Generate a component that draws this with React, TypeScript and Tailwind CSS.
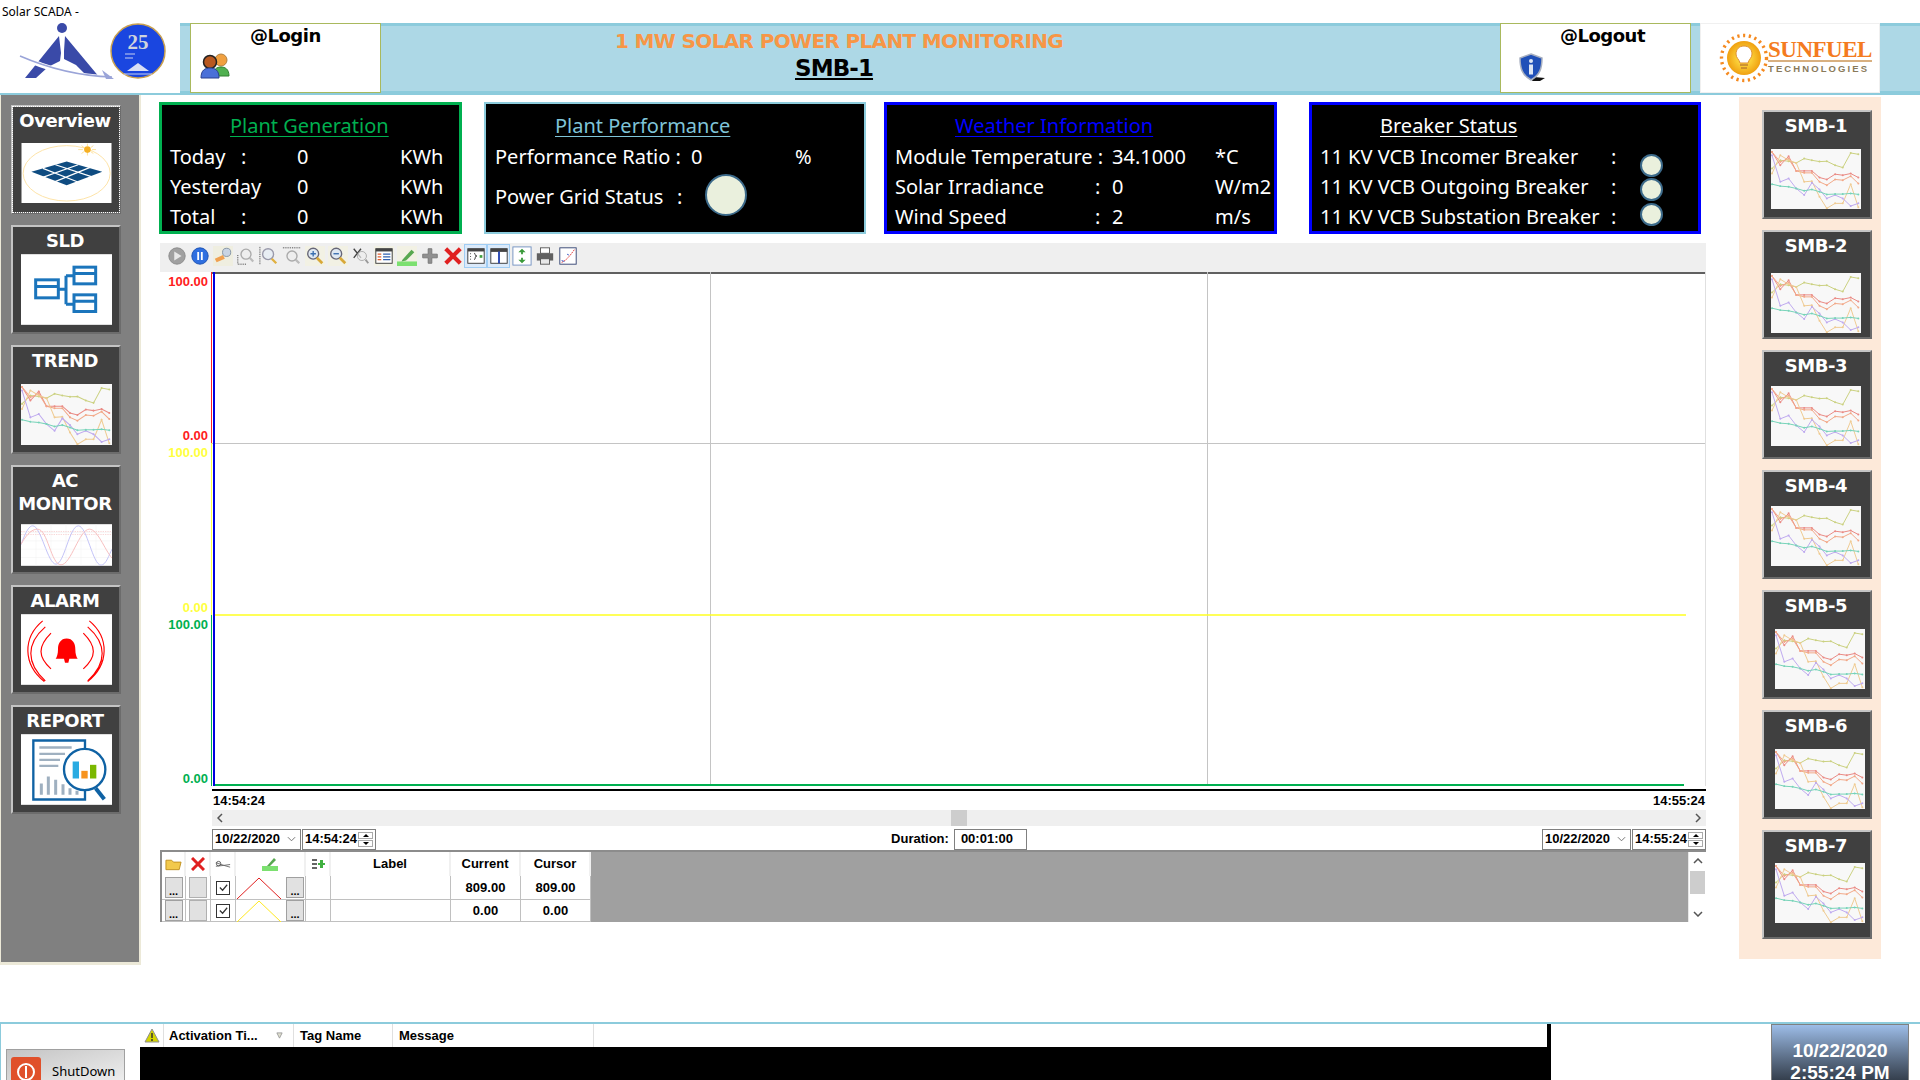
import type { ReactNode } from 'react';

// ==================== THUMBNAILS ====================
const TREND_LINES = [
    { color: '#cbd180', points: '125,205 150,180 175,183 198,188 222,175 245,180 268,184 290,183 315,195 338,202 362,158 385,162' },
    { color: '#ea8a84', points: '125,155 150,195 175,168 198,212 222,212 245,212 268,232 290,238 315,222 338,225 362,220 385,232' },
    { color: '#f2a888', points: '125,155 150,185 175,175 198,212 222,218 245,218 268,245 290,255 315,238 338,240 362,228 385,250' },
    { color: '#efcb92', points: '125,220 150,165 175,180 198,188 222,245 245,243 268,290 290,325 315,310 338,310 362,252 385,322' },
    { color: '#bea9ef', points: '125,165 150,245 175,235 198,265 222,285 245,248 268,268 290,295 315,285 338,295 362,318 385,310' },
    { color: '#76d3b8', points: '125,252 150,258 175,260 198,265 222,272 245,268 268,275 290,283 315,282 338,282 362,280 385,283' },
];

function TrendThumb({ className }: { className: string }) {
    return (
        <svg viewBox="122 146 271 181" className={className} preserveAspectRatio="none">
            <rect x="122" y="146" width="271" height="181" fill="#f8f8f8" />
            {TREND_LINES.map((l) => (
                <g key={l.color}>
                    <polyline points={l.points} fill="none" stroke={l.color} strokeWidth="3" />
                    {l.points.split(' ').map((p) => {
                        const [x, y] = p.split(',');
                        return <circle key={p} cx={x} cy={y} r="3" fill={l.color} />;
                    })}
                </g>
            ))}
        </svg>
    );
}

const OverviewThumb = () => (
    <svg viewBox="60 430 273 182" className="w-[91px] h-[60px]">
        <rect x="60" y="430" width="273" height="182" fill="#fff" />
        <ellipse cx="197" cy="522" rx="132" ry="84" fill="none" stroke="#fde3a7" strokeWidth="3" />
        <circle cx="260" cy="450" r="10" fill="#f6b024" />
        <g stroke="#fbd36b" strokeWidth="2">
            <path d="M232 450h14M274 450h12M260 432v8M260 460v8M242 438l8 6M270 456l8 6M278 438l-8 6M250 456l-8 6" />
        </g>
        <polygon points="90,517 197,486 305,517 197,558" fill="#0f4c81" />
        <g stroke="#fff" strokeWidth="3.5">
            <path d="M122,535 L232,496 M160,548 L268,504 M125,507 L235,550 M163,496 L272,532" />
        </g>
    </svg>
);

const SldThumb = () => (
    <svg viewBox="60 100 273 212" className="w-[91px] h-[71px]">
        <rect x="60" y="100" width="273" height="212" fill="#fff" />
        <g fill="none" stroke="#1b75bc" strokeWidth="9">
            <rect x="104" y="177" width="68" height="54" />
            <rect x="219" y="139" width="65" height="50" />
            <rect x="219" y="222" width="65" height="50" />
            <path d="M104 197h68M219 158h65M219 241h65M172 205h23M195 165v85M195 165h24M195 250h24" />
        </g>
    </svg>
);

const AcThumb = () => (
    <svg viewBox="60 910 273 125" className="w-[91px] h-[42px]">
        <rect x="60" y="910" width="273" height="125" fill="#fff" />
        <path d="M60 935H333M60 960H333M60 985H333M60 1010H333M105 910V1035M150 910V1035M195 910V1035M240 910V1035M285 910V1035" stroke="#f0f0f0" strokeWidth="1.5" />
        <path d="M60 932H333M60 941H333" stroke="#f6c6c6" strokeWidth="2" strokeDasharray="4 3" />
        <path d="M60 972C75 930 85 915 95 915C120 915 140 1030 165 1030C190 1030 205 915 232 915C258 915 275 1033 300 1033C315 1033 325 1000 333 985" fill="none" stroke="#c4c4f8" strokeWidth="3" />
        <path d="M60 970C80 935 95 925 110 925C140 925 150 1032 180 1032C210 1032 235 925 265 925C290 925 310 985 333 1012" fill="none" stroke="#f8c0c0" strokeWidth="3" />
    </svg>
);

const AlarmThumb = () => (
    <svg viewBox="60 130 273 212" className="w-[91px] h-[71px]">
        <rect x="60" y="130" width="273" height="212" fill="#fff" />
        <path d="M197 203c-18 0-26 15-26 32 0 14-3 23-7 29h66c-4-6-7-15-7-29 0-17-8-32-26-32zM189 264h16l-3 12h-10z" fill="#f00" />
        <g fill="none" stroke="#f00" strokeWidth="3.5">
            <path d="M150 187c-40 40-40 70 0 107M133 168c-58 50-58 110 0 162M125 150c-60 50-60 130 5 182" />
            <path d="M247 187c40 40 40 70 0 107M260 168c58 50 58 110 0 162M265 150c60 50 60 130 -5 182" />
        </g>
    </svg>
);

const ReportThumb = () => (
    <svg viewBox="60 490 273 212" className="w-[91px] h-[71px]">
        <rect x="60" y="490" width="273" height="212" fill="#fff" />
        <path d="M252 540V509H97V686H252V650" fill="none" stroke="#0f62a4" strokeWidth="7" />
        <path d="M115 530H212M115 549H192M115 567H177M115 585H172" stroke="#9fb0c0" strokeWidth="7" />
        <path d="M121 672V638M142 672V617M164 672V627M186 672V640M207 672V652M228 672V660" stroke="#9fb0c0" strokeWidth="9" />
        <circle cx="251" cy="596" r="62" fill="#fff" stroke="#0f62a4" strokeWidth="7" />
        <rect x="215" y="572" width="19" height="51" fill="#29abe2" />
        <rect x="241" y="600" width="19" height="23" fill="#f7931e" />
        <rect x="267" y="582" width="19" height="41" fill="#7ab800" />
        <path d="M284 652L310 685" stroke="#0f62a4" strokeWidth="12" />
    </svg>
);

// ==================== SMALL ICONS ====================
const tb = 'w-[20px] h-[20px]';
const TOOLBAR_ICONS: ReactNode[] = [
    <svg viewBox="0 0 22 22" className={tb}><circle cx="11" cy="11" r="9" fill="#a0a0a0" stroke="#8a8a8a" /><path d="M8 6l8 5-8 5z" fill="#e8e8e8" /></svg>,
    <svg viewBox="0 0 22 22" className={tb}><circle cx="11" cy="11" r="9" fill="#2f6fe0" stroke="#1a4fb0" /><path d="M8 6.5h2v9H8zM12 6.5h2v9h-2z" fill="#fff" /></svg>,
    <svg viewBox="0 0 22 22" className={tb}><rect width="22" height="22" fill="#efeee0" /><path d="M2 14l9-4 2 4-9 4z" fill="#f0a050" /><circle cx="15" cy="7" r="4.5" fill="#c8d4e4" stroke="#8090a0" /></svg>,
    <svg viewBox="0 0 22 22" className={tb}><path d="M2 10v10h10" fill="none" stroke="#333" strokeDasharray="1 1" /><circle cx="11" cy="9" r="5.5" fill="#eee" stroke="#aaa" strokeWidth="1.5" /><path d="M15 13l4 4" stroke="#bbb" strokeWidth="2.5" /></svg>,
    <svg viewBox="0 0 22 22" className={tb}><path d="M1 1v20" stroke="#333" strokeDasharray="1 1" /><circle cx="10" cy="9" r="6" fill="#e8eef4" stroke="#99a" strokeWidth="1.5" /><path d="M14 14l5 5" stroke="#e0b040" strokeWidth="2.5" /></svg>,
    <svg viewBox="0 0 22 22" className={tb}><path d="M1 2h20" stroke="#333" strokeDasharray="1 1" /><circle cx="11" cy="11" r="5.5" fill="#eee" stroke="#aaa" strokeWidth="1.5" /><path d="M15 15l4 4" stroke="#bbb" strokeWidth="2.5" /></svg>,
    <svg viewBox="0 0 22 22" className={tb}><rect width="22" height="22" fill="#f2f1e4" /><circle cx="9" cy="8.5" r="6" fill="#dfe8f2" stroke="#667" strokeWidth="1.5" /><path d="M6 8.5h6M9 5.5v6" stroke="#3a6fb0" strokeWidth="1.5" /><path d="M13 13l6 6" stroke="#d8a838" strokeWidth="3" /></svg>,
    <svg viewBox="0 0 22 22" className={tb}><rect width="22" height="22" fill="#f2f1e4" /><circle cx="9" cy="8.5" r="6" fill="#dfe8f2" stroke="#667" strokeWidth="1.5" /><path d="M6 8.5h6" stroke="#3a6fb0" strokeWidth="1.5" /><path d="M13 13l6 6" stroke="#d8a838" strokeWidth="3" /></svg>,
    <svg viewBox="0 0 22 22" className={tb}><path d="M3 3l8 10M11 3l-8 10" stroke="#444" strokeWidth="1.5" /><circle cx="12" cy="11" r="5" fill="#eee" fillOpacity=".7" stroke="#aaa" /><path d="M16 15l3 4" stroke="#999" strokeWidth="2" /></svg>,
    <svg viewBox="0 0 22 22" className={tb}><rect width="22" height="22" fill="#f2f1e4" /><rect x="2" y="3" width="18" height="16" fill="#fff" stroke="#333" /><rect x="2" y="3" width="18" height="3" fill="#444" /><path d="M4 9h4M4 12h4M4 15h4" stroke="#e06030" strokeWidth="1.5" /><path d="M10 9h8M10 12h8M10 15h8" stroke="#3060b0" strokeWidth="1.5" /></svg>,
    <svg viewBox="0 0 22 22" className={tb}><rect width="22" height="22" fill="#f2f1e4" /><rect y="17" width="22" height="5" fill="#7ce070" /><path d="M6 15l10-11 3 3-9 9-5 1z" fill="#58a850" /></svg>,
    <svg viewBox="0 0 22 22" className={tb}><path d="M9 3h4v6h6v4h-6v6H9v-6H3V9h6z" fill="#909090" stroke="#777" /></svg>,
    <svg viewBox="0 0 22 22" className={tb}><path d="M3 3l16 16M19 3L3 19" stroke="#e02020" strokeWidth="4.5" /></svg>,
    <svg viewBox="0 0 22 22" className={tb}><rect x="2" y="3" width="18" height="16" fill="#fff" stroke="#333" /><rect x="2" y="3" width="18" height="3" fill="#444" /><path d="M5 8v1M5 11v1M5 14v1" stroke="#333" /><path d="M9 8c2 0 0 3 3 3-3 0-1 4-3 4" fill="none" stroke="#333" /><rect x="15" y="10" width="3" height="3" fill="#40a040" /></svg>,
    <svg viewBox="0 0 22 22" className={tb}><rect x="2" y="3" width="18" height="16" fill="#fff" stroke="#333" /><rect x="2" y="3" width="18" height="3.5" fill="#444" /><rect x="10" y="6" width="2" height="13" fill="#2040b0" /></svg>,
    <svg viewBox="0 0 22 22" className={tb}><rect x="1" y="1" width="20" height="20" fill="#fff" stroke="#7090c0" /><path d="M11 3l4 4h-3v2h-2V7H7zM11 19l4-4h-3v-2h-2v2H7z" fill="#3a9a3a" /></svg>,
    <svg viewBox="0 0 22 22" className={tb}><rect x="6" y="2" width="10" height="6" fill="#fff" stroke="#555" /><rect x="2" y="8" width="18" height="8" fill="#606060" /><rect x="6" y="14" width="10" height="6" fill="#e8e8e8" stroke="#555" /></svg>,
    <svg viewBox="0 0 22 22" className={tb}><rect x="2" y="2" width="18" height="18" fill="#fff" stroke="#304070" /><path d="M4 18C9 16 13 11 18 4" fill="none" stroke="#e03030" strokeDasharray="2 1" /><path d="M4 16l3 1M10 9l2 1" stroke="#3050c0" /></svg>,
];

const UsersIcon = () => (
    <svg viewBox="0 0 32 26" className="w-[32px] h-[26px]">
        <circle cx="21" cy="7" r="6" fill="#f0a040" stroke="#b08040" />
        <path d="M13 23c0-7 4-9 8-9s8 2 8 9z" fill="#50b050" stroke="#308030" />
        <circle cx="10" cy="9" r="6.5" fill="#b85820" stroke="#222" strokeWidth="1.5" />
        <path d="M1 25c0-8 4-10 9-10s9 2 9 10z" fill="#4a70d8" stroke="#2a4090" />
    </svg>
);

const ShieldIcon = () => (
    <svg viewBox="0 0 26 28" className="w-[26px] h-[28px]">
        <path d="M15 24l11 1-5 3h-8z" fill="#111" />
        <path d="M12 1l11 4c0 10-2 17-11 22C3 22 1 15 1 5z" fill="#2050b8" stroke="#a8b0c0" strokeWidth="1.5" />
        <circle cx="12" cy="8" r="2" fill="#dde6f5" />
        <rect x="10" y="11.5" width="4" height="10" fill="#dde6f5" />
    </svg>
);

const AaiLogo = () => (
    <svg viewBox="0 0 180 70" className="w-[180px] h-[70px]">
        <circle cx="62" cy="5" r="5" fill="#3a4aa8" />
        <polygon points="59,13 61,30 60,38 48,44 36,55 25,55" fill="#3a4aa8" />
        <polygon points="65,13 100,55 89,55 76,42 64,36 64,28" fill="#3a4aa8" />
        <path d="M20 33C50 48 80 54 112 55" fill="none" stroke="#fff" strokeWidth="5" />
        <path d="M20 33C50 46 80 53 112 54" fill="none" stroke="#9aa4d8" strokeWidth="1.5" />
        <path d="M102 47l12 9h-8z" fill="#9aa4d8" />
        <circle cx="138" cy="28" r="27" fill="#1a46e0" stroke="#c8a050" strokeWidth="1.5" />
        <text x="138" y="26" textAnchor="middle" fontSize="21" fontWeight="700" fontFamily="Liberation Serif" fill="#d0d4dc">25</text>
        <path d="M125 31h10M125 35h8" stroke="#c8d0f0" />
        <path d="M127 48l11-8 11 8z" fill="#d8def5" />
        <path d="M124 51h28" stroke="#c8d0f0" />
    </svg>
);

const SunIcon = () => (
    <svg viewBox="0 0 50 50" className="w-[50px] h-[50px]">
        <defs>
            <radialGradient id="sun">
                <stop offset="0.4" stopColor="#fbd23a" />
                <stop offset="1" stopColor="#f0a010" />
            </radialGradient>
        </defs>
        <circle cx="25" cy="25" r="22.5" fill="none" stroke="#f58a20" strokeWidth="3.4" strokeDasharray="2.2 3.6" />
        <circle cx="25" cy="25" r="17" fill="url(#sun)" />
        <path d="M25 13c-5 0-8 3.500-8 8 0 4 3 5 4 9h8c1-4 4-5 4-9 0-4.500-3-8-8-8z" fill="#fff" stroke="#e09030" />
        <path d="M21 32h8M22 35h6" stroke="#c08030" strokeWidth="1.5" />
    </svg>
);

// ==================== NAV BUTTONS ====================
function NavButton({ label, body, headClass, dotted }: { label: ReactNode; body: ReactNode; headClass: string; dotted?: boolean }) {
    return (
        <div className={`flex flex-col items-center w-[110px] h-[109px] bg-[#404040] border-2 border-t-[#c4c4c4] border-l-[#c4c4c4] border-r-[#6c6c6c] border-b-[#6c6c6c] ${dotted ? 'outline outline-1 outline-dotted outline-white -outline-offset-2' : ''}`}>
            <div className={`${headClass} pt-[2px] pr-[2px] w-full text-center text-white font-bold text-[18px] leading-[23px] font-['DejaVu_Sans'] tracking-[-0.45px]`}>{label}</div>
            {body}
        </div>
    );
}

const SMB_ITEMS = [
    { label: 'SMB-1', head: 'h-[37px]', thumb: 'w-[90px] h-[60px] -translate-x-[1px]' },
    { label: 'SMB-2', head: 'h-[41px]', thumb: 'w-[90px] h-[60px] -translate-x-[1px]' },
    { label: 'SMB-3', head: 'h-[34px]', thumb: 'w-[90px] h-[60px] -translate-x-[1px]' },
    { label: 'SMB-4', head: 'h-[34px]', thumb: 'w-[90px] h-[60px] -translate-x-[1px]' },
    { label: 'SMB-5', head: 'h-[37px]', thumb: 'w-[90px] h-[60px] translate-x-[3px]' },
    { label: 'SMB-6', head: 'h-[37px]', thumb: 'w-[90px] h-[60px] translate-x-[3px]' },
    { label: 'SMB-7', head: 'h-[31px]', thumb: 'w-[90px] h-[60px] translate-x-[3px]' },
];

// ==================== STATUS PANELS ====================
const Lamp = ({ className }: { className: string }) => (
    <span className={`block rounded-full bg-[#eaf0dd] border-[2px] border-[#3c6a8a] ${className}`} />
);

function Panel({ border, className, title, titleClass, children }: { border: string; className: string; title: string; titleClass: string; children: ReactNode }) {
    return (
        <div className={`h-[132px] bg-black ${border} ${className} text-white text-[20px] leading-[30px] font-['Noto_Sans'] whitespace-pre`}>
            <div className={`h-[37px] pt-[6px] underline underline-offset-[3px] decoration-1 ${titleClass}`}>{title}</div>
            {children}
        </div>
    );
}

const Row = ({ children }: { children: ReactNode }) => <div className="flex h-[30px] items-center">{children}</div>;

const DateTime = ({ date, time }: { date: string; time: string }) => (
    <div className="flex gap-[1px] text-[13px] font-bold text-black">
        <div className="w-[89px] h-[21px] border border-[#808080] bg-white flex items-center justify-between pl-[2px] pr-[4px]">
            {date}
            <svg viewBox="0 0 10 6" className="w-[9px] h-[6px]"><path d="M1 1l4 4 4-4" fill="none" stroke="#666" /></svg>
        </div>
        <div className="w-[74px] h-[21px] border border-[#808080] bg-white flex items-center justify-between pl-[2px] pr-[2px]">
            {time}
            <div className="flex flex-col gap-[1px]">
                <div className="w-[15px] h-[7px] border border-[#aaa] flex items-center justify-center text-[0px]"><span className="w-0 h-0 border-x-[3px] border-x-transparent border-b-[3px] border-b-black" /></div>
                <div className="w-[15px] h-[7px] border border-[#aaa] flex items-center justify-center text-[0px]"><span className="w-0 h-0 border-x-[3px] border-x-transparent border-t-[3px] border-t-black" /></div>
            </div>
        </div>
    </div>
);

const Dots = () => (
    <div className="w-[18px] h-[21px] bg-[#e1e1e1] border border-[#a0a0a0] flex items-end justify-center text-[11px] leading-[12px] font-bold">...</div>
);

const cellBase = 'border-r border-b border-[#c0c0c0] flex items-center justify-center';
const headBase = 'border-r-2 border-[#f0f0f0] flex items-center justify-center';

function TableRow({ stroke, current, cursor }: { stroke: string; current: string; cursor: string }) {
    return (
        <>
            <div className={cellBase}><Dots /></div>
            <div className={cellBase}><div className="w-[18px] h-[21px] bg-[#e1e1e1] border border-[#b0b0b0]" /></div>
            <div className={cellBase}>
                <div className="w-[14px] h-[14px] border border-[#333] bg-white flex items-center justify-center">
                    <svg viewBox="0 0 12 12" className="w-[11px] h-[11px]"><path d="M2 6l3 3 5-6" fill="none" stroke="#333" strokeWidth="1.3" /></svg>
                </div>
            </div>
            <div className={`${cellBase} justify-between pr-[1px]`}>
                <svg viewBox="0 0 50 22" className="w-[50px] h-[22px]"><polyline points="1,22 23,1 45,22" fill="none" stroke={stroke} /></svg>
                <Dots />
            </div>
            <div className={cellBase} />
            <div className={cellBase} />
            <div className={cellBase}>{current}</div>
            <div className={cellBase}>{cursor}</div>
        </>
    );
}

// ==================== PAGE ====================
export default function App() {
    return (
        <div className="w-[1920px] h-[1080px] overflow-hidden bg-white flex flex-col font-['Liberation_Sans']">
            <div className="h-[23px] pl-[2px] text-[12px] leading-[23px] text-black font-['Noto_Sans']">Solar SCADA -</div>

            {/* Header */}
            <div className="h-[72px] flex bg-[#add8e6] border-t-[3px] border-b-[4px] border-[#8ccbdc] shrink-0">
                <div className="w-[180px] h-[70px] -mt-[3px] bg-white"><AaiLogo /></div>
                <div className="ml-[10px] w-[191px] h-[70px] -mt-[3px] bg-white border border-[#a9b95d] flex flex-col shrink-0">
                    <div className="text-[18px] leading-[22px] pt-[1px] font-bold font-['DejaVu_Sans'] tracking-[-0.5px] pl-[59px] text-black">@Login</div>
                    <div className="pl-[9px] pt-[6px]"><UsersIcon /></div>
                </div>
                <div className="flex-1 flex flex-col items-start">
                    <div className="text-[#f79646] font-bold text-[20px] leading-[24px] pt-[3px] font-['DejaVu_Sans'] tracking-[-0.65px] pl-[234px]">1 MW SOLAR POWER PLANT MONITORING</div>
                    <div className="text-black font-bold text-[23px] leading-[28px] underline font-['DejaVu_Sans'] tracking-[-0.9px] pt-[1px] pl-[414px]">SMB-1</div>
                </div>
                <div className="w-[191px] h-[70px] -mt-[3px] bg-white border border-[#a9b95d] flex flex-col shrink-0">
                    <div className="text-[18px] leading-[22px] pt-[1px] font-bold font-['DejaVu_Sans'] tracking-[-0.5px] pl-[59px] text-black">@Logout</div>
                    <div className="pl-[18px] pt-[6px]"><ShieldIcon /></div>
                </div>
                <div className="ml-[9px] w-[180px] h-[70px] -mt-[3px] bg-white border border-[#f0f0f0] flex items-center pl-[18px] shrink-0">
                    <SunIcon />
                    <div className="ml-[-1px] flex flex-col -mt-[2px]">
                        <div className="text-[#f47b20] font-bold text-[23px] leading-[20px] font-['Liberation_Serif'] tracking-[-0.5px] border-b-2 border-[#d8b080]">SUNFUEL</div>
                        <div className="text-[#8a7a5a] font-bold text-[9.5px] leading-[13px] tracking-[2.1px]">TECHNOLOGIES</div>
                    </div>
                </div>
                <div className="w-[40px]" />
            </div>

            {/* Body */}
            <div className="h-[927px] flex shrink-0">
                {/* Left nav */}
                <div className="w-[141px] h-[870px] pl-[1px] pr-[2px] pb-[3px] bg-[#ece9d8] shrink-0">
                    <div className="w-[138px] h-full bg-[#808080] pl-[10px] pt-[10px] flex flex-col gap-[11px]">
                        <NavButton dotted label="Overview" headClass="h-[36px]" body={<OverviewThumb />} />
                        <NavButton label="SLD" headClass="h-[27px]" body={<SldThumb />} />
                        <NavButton label="TREND" headClass="h-[37px]" body={<TrendThumb className="w-[91px] h-[61px]" />} />
                        <NavButton label={<>AC<br />MONITOR</>} headClass="h-[57px]" body={<AcThumb />} />
                        <NavButton label="ALARM" headClass="h-[27px]" body={<AlarmThumb />} />
                        <NavButton label="REPORT" headClass="h-[27px]" body={<ReportThumb />} />
                    </div>
                </div>

                {/* Centre */}
                <div className="w-[1598px] shrink-0 pl-[18px] pt-[7px] pr-[33px] flex flex-col">
                    <div className="flex h-[132px]">
                        <Panel border="border-[3px] border-[#00b050]" className="w-[303px]" title="Plant Generation" titleClass="text-[#00b050] pl-[68px]">
                            <div className="pl-[8px]">
                                <Row><span className="w-[71px]">Today</span><span className="w-[56px]">:</span><span className="w-[103px]">0</span>KWh</Row>
                                <Row><span className="w-[127px]">Yesterday</span><span className="w-[103px]">0</span>KWh</Row>
                                <Row><span className="w-[71px]">Total</span><span className="w-[56px]">:</span><span className="w-[103px]">0</span>KWh</Row>
                            </div>
                        </Panel>
                        <Panel border="border-2 border-[#8ccbdc]" className="ml-[22px] w-[382px] pt-px" title="Plant Performance" titleClass="text-[#7fc4d8] pl-[69px]">
                            <div className="pl-[9px]">
                                <Row><span className="w-[196px]">Performance Ratio :</span><span className="w-[104px]">0</span>%</Row>
                                <div className="flex items-center h-[50px]">
                                    <span className="w-[182px]">Power Grid Status</span>
                                    <span className="w-[28px]">:</span>
                                    <Lamp className="w-[42px] h-[42px] -mt-[4px]" />
                                </div>
                            </div>
                        </Panel>
                        <Panel border="border-[3px] border-[#0000ff]" className="ml-[18px] w-[393px]" title="Weather Information" titleClass="text-[#0000ff] pl-[68px]">
                            <div className="pl-[8px]">
                                <Row><span className="w-[217px]">Module Temperature :</span><span className="w-[103px]">34.1000</span>*C</Row>
                                <Row><span className="w-[200px]">Solar Irradiance</span><span className="w-[17px]">:</span><span className="w-[103px]">0</span>W/m2</Row>
                                <Row><span className="w-[200px]">Wind Speed</span><span className="w-[17px]">:</span><span className="w-[103px]">2</span>m/s</Row>
                            </div>
                        </Panel>
                        <Panel border="border-[3px] border-[#0000ff]" className="ml-[32px] w-[392px]" title="Breaker Status" titleClass="text-white pl-[68px]">
                            <div className="pl-[8px]">
                                <Row><span className="w-[291px]">11 KV VCB Incomer Breaker</span><span className="w-[29px]">:</span><Lamp className="w-[23px] h-[23px] mt-[16px]" /></Row>
                                <Row><span className="w-[291px]">11 KV VCB Outgoing Breaker</span><span className="w-[29px]">:</span><Lamp className="w-[23px] h-[23px] mt-[5px]" /></Row>
                                <Row><span className="w-[291px]">11 KV VCB Substation Breaker</span><span className="w-[29px]">:</span><Lamp className="w-[23px] h-[23px] -mt-[6px]" /></Row>
                            </div>
                        </Panel>
                    </div>

                    {/* Toolbar */}
                    <div className="mt-[9px] ml-[1px] h-[29px] w-[1546px] bg-[#efefef] flex items-start pt-[1px] pl-[5px] shrink-0">
                        {TOOLBAR_ICONS.map((icon, i) => (
                            <div key={i} className={`w-[23px] h-[24px] flex items-center justify-center ${i === 13 || i === 14 ? 'bg-[#dbeafa] border border-[#a0cdf4]' : ''}`}>{icon}</div>
                        ))}
                    </div>

                    {/* Chart */}
                    <div className="ml-[1px] flex h-[514px] w-[1546px] shrink-0 font-bold text-[13px]">
                        <div className="w-[52px] flex flex-col">
                            <div className="h-[171px] flex flex-col justify-between items-end text-[#ff2020] border-r border-[#ff2020] pr-[3px] pt-[3px] leading-[14px]"><span>100.00</span><span>0.00</span></div>
                            <div className="h-[172px] flex flex-col justify-between items-end text-[#ffff40] border-r border-[#ffff40] pr-[3px] pt-[3px] leading-[14px]"><span>100.00</span><span>0.00</span></div>
                            <div className="h-[171px] flex flex-col justify-between items-end text-[#00b050] border-r border-[#00b050] pr-[3px] pt-[3px] leading-[14px]"><span>100.00</span><span>0.00</span></div>
                        </div>
                        <svg viewBox="0 0 1494 514" className="w-[1494px] h-[514px]">
                            <path d="M0 1H1494" stroke="#606060" strokeWidth="2" />
                            <path d="M498.500 0V514M995.500 0V514M0 171.500H1494" stroke="#c4c4c4" />
                            <path d="M1493.500 0V514" stroke="#e0e0e0" />
                            <path d="M2 343H1474" stroke="#ffff20" strokeWidth="1.500" />
                            <path d="M2 513H1472" stroke="#00b050" strokeWidth="2" />
                            <path d="M2 0V514" stroke="#0000e0" strokeWidth="2" />
                        </svg>
                    </div>

                    <div className="ml-[53px] mt-[3px] w-[1494px] border-t-2 border-black h-[21px] flex justify-between items-center text-[13px] font-bold text-black pl-[1px] pr-[1px] shrink-0">
                        <span>14:54:24</span><span>14:55:24</span>
                    </div>
                    <div className="ml-[53px] w-[1494px] h-[16px] bg-[#efefef] flex items-center justify-between px-[5px] shrink-0">
                        <svg viewBox="0 0 6 10" className="w-[6px] h-[10px]"><path d="M5 1L1 5l4 4" fill="none" stroke="#555" strokeWidth="1.5" /></svg>
                        <div className="w-[16px] h-[16px] bg-[#cdcdcd]" />
                        <svg viewBox="0 0 6 10" className="w-[6px] h-[10px]"><path d="M1 1l4 4-4 4" fill="none" stroke="#555" strokeWidth="1.5" /></svg>
                    </div>
                    <div className="ml-[53px] mt-[2px] w-[1494px] h-[22px] flex items-center justify-between text-[13px] font-bold text-black shrink-0">
                        <DateTime date="10/22/2020" time="14:54:24" />
                        <div className="flex items-center">
                            <span className="mr-[5px]">Duration:</span>
                            <div className="w-[73px] h-[21px] border border-[#808080] flex items-center pl-[6px]">00:01:00</div>
                        </div>
                        <DateTime date="10/22/2020" time="14:55:24" />
                    </div>

                    {/* Trend table */}
                    <div className="ml-[1px] w-[1546px] h-[72px] border-t-2 border-l-2 border-[#8c8c8c] flex text-[13px] font-bold text-black shrink-0">
                        <div className="grid grid-cols-[24px_25px_25px_70px_25px_120px_70px_70px] grid-rows-[24px_24px_22px] w-[429px]">
                            <div className={headBase}><svg viewBox="0 0 18 14" className="w-[17px] h-[14px]"><path d="M1 3h6l2 2h8l-2 8H1z" fill="#f2c94c" stroke="#c09020" /></svg></div>
                            <div className={headBase}><svg viewBox="0 0 14 14" className="w-[14px] h-[14px]"><path d="M1 1l12 12M13 1L1 13" stroke="#e02020" strokeWidth="3" /></svg></div>
                            <div className={headBase}><svg viewBox="0 0 18 10" className="w-[16px] h-[9px]"><path d="M1 3l9 3 7-1M1 7l9-1 7 2" fill="none" stroke="#666" /><circle cx="4" cy="4" r="2.5" fill="none" stroke="#555" /></svg></div>
                            <div className={headBase}><svg viewBox="0 0 16 14" className="w-[16px] h-[14px]"><rect y="9" width="16" height="5" fill="#7ce070" /><path d="M5 9l7-8 2 2-6 6z" fill="#58a850" /></svg></div>
                            <div className={headBase}><svg viewBox="0 0 14 10" className="w-[14px] h-[10px]"><path d="M1 1h5M1 5h5M1 9h5" stroke="#333" strokeWidth="1.5" /><path d="M9 1h3v3h2v2h-2v3H9V6H7V4h2z" fill="#40b040" /></svg></div>
                            <div className={headBase}>Label</div>
                            <div className={headBase}>Current</div>
                            <div className={headBase}>Cursor</div>
                            <TableRow stroke="#e02020" current="809.00" cursor="809.00" />
                            <TableRow stroke="#ffe820" current="0.00" cursor="0.00" />
                        </div>
                        <div className="w-[1097px] bg-[#a0a0a0]" />
                        <div className="w-[18px] border-l border-[#e8e8e8] flex flex-col items-center justify-between pt-[6px] pb-[5px]">
                            <svg viewBox="0 0 10 6" className="w-[10px] h-[6px]"><path d="M1 5l4-4 4 4" fill="none" stroke="#555" strokeWidth="1.5" /></svg>
                            <div className="w-[15px] h-[23px] bg-[#cdcdcd] mb-[10px]" />
                            <svg viewBox="0 0 10 6" className="w-[10px] h-[6px]"><path d="M1 1l4 4 4-4" fill="none" stroke="#555" strokeWidth="1.5" /></svg>
                        </div>
                    </div>
                </div>

                {/* Right panel */}
                <div className="w-[142px] h-[862px] mt-[2px] bg-[#fde9d9] pl-[23px] pt-[13px] flex flex-col gap-[11px] shrink-0">
                    {SMB_ITEMS.map((s) => (
                        <NavButton key={s.label} label={s.label} headClass={s.head} body={<TrendThumb className={s.thumb} />} />
                    ))}
                </div>
            </div>

            {/* Footer */}
            <div className="h-[58px] flex border-t-2 border-[#8ccbdc] shrink-0 overflow-hidden">
                <div className="w-[140px] border-l border-[#8ccbdc] pl-[5px] pt-[25px] shrink-0">
                    <div className="w-[119px] h-[36px] bg-gradient-to-br from-[#c4c4c4] to-[#f0f0f0] border border-[#a0a0a0] flex pl-[4px] pt-[7px]">
                        <div className="w-[30px] h-[30px] bg-[#e0502a] rounded-[3px] flex items-center justify-center">
                            <span className="w-[18px] h-[18px] rounded-full border-2 border-white flex items-center justify-center"><span className="w-[2px] h-[12px] bg-white" /></span>
                        </div>
                        <span className="ml-[11px] text-[13px] leading-[28px] text-black font-['Noto_Sans']">ShutDown</span>
                    </div>
                </div>
                <div className="w-[1411px] flex flex-col border-r-4 border-black shrink-0">
                    <div className="h-[23px] flex items-center text-[13px] font-bold text-black shrink-0">
                        <div className="w-[24px] h-full flex items-center justify-center border-r border-[#e0e0e0]">
                            <svg viewBox="0 0 16 15" className="w-[16px] h-[15px]"><path d="M8 1l7 13H1z" fill="#d4d400" stroke="#909090" /><path d="M8 5v5M8 11v2" stroke="#333" strokeWidth="1.5" /></svg>
                        </div>
                        <div className="w-[130px] h-full flex items-center justify-between pl-[5px] pr-[10px] border-r border-[#e0e0e0]">
                            Activation Ti...
                            <svg viewBox="0 0 8 8" className="w-[7px] h-[7px]"><path d="M1 1h6L4 7z" fill="#e0e0d0" stroke="#999" /></svg>
                        </div>
                        <div className="w-[99px] h-full flex items-center pl-[6px] border-r border-[#e0e0e0]">Tag Name</div>
                        <div className="w-[201px] h-full flex items-center pl-[6px] border-r border-[#e0e0e0]">Message</div>
                    </div>
                    <div className="flex-1 bg-black" />
                </div>
                <div className="w-[220px] shrink-0" />
                <div className="w-[138px] h-[70px] bg-gradient-to-b from-[#9dbde8] to-[#20262e] border border-[#808080] text-white font-bold text-[19px] leading-[22px] text-center pt-[15px] shrink-0">
                    10/22/2020<br />2:55:24 PM
                </div>
            </div>
        </div>
    );
}
